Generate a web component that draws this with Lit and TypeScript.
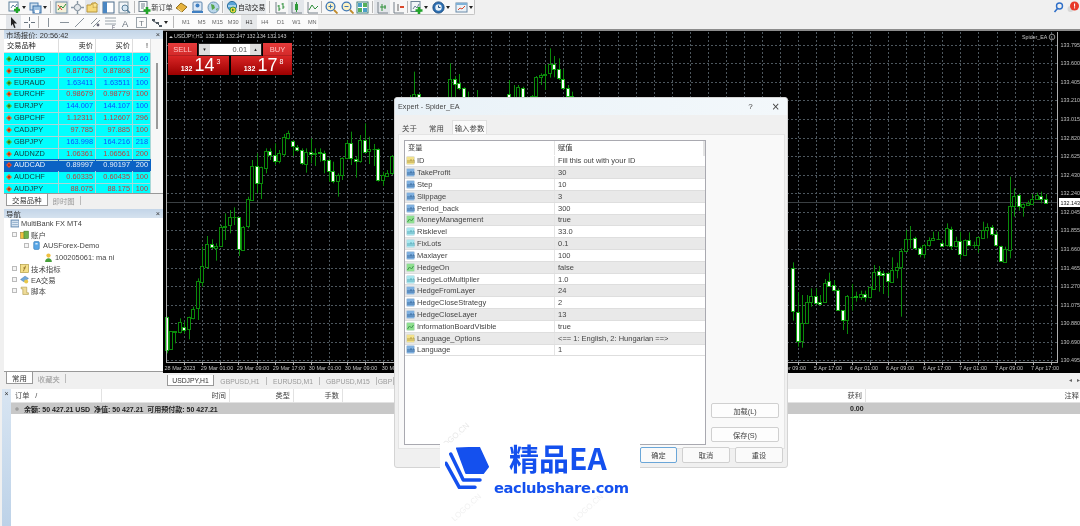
import { LitElement, html, css, svg } from "lit";
import { customElement } from "lit/decorators.js";

// [zoomX, bodyTop, bodyBottom, high, low, whiteBody]
type Candle = [number, number, number, number, number, number];

const leftCandles: Candle[] = [
  [5,560,658,560,670,1],[18,604,658,604,660,0],[31,604,606,604,640,0],[45,575,606,565,610,0],[58,590,598,575,610,1],
  [72,562,598,560,628,0],[85,538,565,530,568,0],[99,454,535,445,570,0],[112,408,455,350,470,0],[126,342,410,318,412,0],
  [140,342,352,328,358,1],[153,348,355,340,392,0],[167,290,346,285,350,0],[180,288,290,250,330,0],[194,262,287,240,310,0],
  [207,262,263,232,285,0],[221,262,358,262,378,1],[234,290,358,288,360,0],[248,208,290,200,295,0],[262,108,210,90,212,0],
  [275,108,160,70,190,1],[289,112,160,110,207,0],[302,62,112,55,130,0],[316,62,75,55,90,1],[329,75,94,40,105,1],
  [343,70,95,60,100,0],[356,20,70,12,80,0],[370,8,22,2,28,0],[383,34,50,30,78,1],[397,50,60,45,65,1],
  [410,60,100,55,105,1],[424,65,100,55,128,0],[437,65,72,25,100,1],[451,68,72,55,108,0],[464,67,70,55,95,1],
  [478,70,90,62,130,1],[491,90,124,85,155,1],[505,124,154,95,160,1],[519,136,154,130,200,0],[532,84,136,82,150,0],
  [546,40,85,30,88,0],[559,40,86,5,105,1],[573,86,92,80,143,1],[586,30,94,15,98,0],[600,30,65,-20,68,1],
  [613,58,64,20,102,0],[627,58,59,42,108,0],[640,58,150,55,155,1],[654,136,150,125,168,0],[667,128,136,120,140,0],[681,78,130,75,135,0],
];
const topCandles: Candle[] = [
  [150,300,301,285,310,0],[163,283,310,215,320,0],[177,283,310,283,320,1],[271,238,310,190,320,0],[285,238,252,228,290,1],
  [298,250,265,222,270,1],[312,263,310,262,320,1],[325,310,311,275,320,0],[352,310,311,270,320,0],[448,283,310,240,320,1],
  [461,310,311,255,320,0],[475,262,310,255,320,0],[488,264,310,260,320,1],[515,287,310,285,320,0],[529,232,288,228,310,0],
  [542,226,233,220,255,0],[556,222,226,195,270,0],[569,192,220,145,233,0],[583,192,208,168,232,1],[596,208,236,175,240,1],
  [610,236,264,208,268,1],[623,264,288,255,290,1],[637,287,310,275,320,1],
];
const rightCandles: Candle[] = [
  [25,265,395,247,422,1],[39,397,483,337,500,1],[52,430,483,345,503,0],[65,367,430,345,432,0],[79,348,365,325,380,0],
  [92,348,370,325,372,1],[106,366,372,345,375,1],[120,310,367,297,368,0],[133,302,316,278,320,1],[147,316,331,300,335,1],
  [160,331,391,325,393,1],[174,391,420,391,450,1],[187,347,420,345,462,0],[201,350,351,312,392,0],[214,348,352,335,365,1],
  [228,342,350,332,360,0],[241,342,350,332,365,1],[255,322,352,320,355,0],[268,275,325,255,330,0],[282,274,287,258,335,1],
  [295,280,287,272,342,1],[309,280,303,275,348,1],[322,269,304,232,305,0],[336,260,270,248,295,0],[349,213,260,205,410,0],
  [363,178,214,150,215,0],[376,177,178,138,205,0],[390,175,204,170,208,1],[404,204,222,200,232,1],[417,194,222,192,235,0],
  [431,180,194,172,200,0],[444,173,180,155,182,0],[458,176,177,155,180,0],[471,188,197,180,200,1],[485,145,197,130,200,0],
  [498,147,197,140,210,1],[512,184,198,170,202,0],[525,184,223,155,238,1],[539,180,224,178,226,0],[552,180,195,157,198,1],
  [566,196,197,185,205,0],[579,172,197,170,218,0],[593,150,173,125,175,0],[606,142,150,130,175,0],[620,142,163,135,168,1],
  [634,163,197,152,200,1],[647,199,244,197,246,1],[661,206,245,200,247,0],[674,77,208,-10,235,0],[688,48,78,25,110,0],
  [701,46,80,42,92,1],[715,72,80,70,110,0],[728,68,73,62,78,0],[742,58,72,42,75,0],[755,46,58,38,60,0],
  [769,49,57,35,70,1],[783,57,68,42,70,1],
];

const drawCandles = (list: Candle[], ox: number, oy: number) =>
  list.map(([zx, t, b, hi, lo, white]) => {
    const x = Math.round(ox + zx / 3) + 0.5;
    const top = Math.round(oy + t / 3) + 0.5;
    const h = Math.max(0, Math.round((b - t) / 3));
    return svg`
      <line x1=${x} x2=${x} y1=${oy + hi / 3} y2=${oy + lo / 3} class="wick"></line>
      ${h < 1
        ? svg`<line x1=${x - 2} x2=${x + 2} y1=${top} y2=${top} class="wick"></line>`
        : svg`<rect x=${x - 2} y=${top} width="3" height=${h} class=${white ? "bear" : "bull"}></rect>`}`;
  });

const prices = ["133.795","133.600","133.405","133.210","133.015","132.820","132.625","132.430","132.240","132.045","131.855","131.660","131.465","131.270","131.075","130.880","130.690","130.495"];
const times: [number, string][] = [
  [180,"28 Mar 2023"],[217,"29 Mar 01:00"],[253,"29 Mar 09:00"],[289,"29 Mar 17:00"],[325,"30 Mar 01:00"],[361,"30 Mar 09:00"],[398,"30 Mar 17:00"],
  [792,"5 Apr 09:00"],[828,"5 Apr 17:00"],[864,"6 Apr 01:00"],[900,"6 Apr 09:00"],[937,"6 Apr 17:00"],[973,"7 Apr 01:00"],[1009,"7 Apr 09:00"],[1045,"7 Apr 17:00"],
];

const quotes = [
  ["AUDUSD","0.66658","0.66718","60","up"],["EURGBP","0.87758","0.87808","50","down"],["EURAUD","1.63411","1.63511","100","up"],
  ["EURCHF","0.98679","0.98779","100","down"],["EURJPY","144.007","144.107","100","up"],["GBPCHF","1.12311","1.12607","296","down"],
  ["CADJPY","97.785","97.885","100","down"],["GBPJPY","163.998","164.216","218","up"],["AUDNZD","1.06361","1.06561","200","down"],
  ["AUDCAD","0.89997","0.90197","200","sel"],["AUDCHF","0.60335","0.60435","100","down"],["AUDJPY","88.075","88.175","100","down"],
];

const params: [string, string, string][] = [
  ["ab","ID","Fill this out with your ID"],["num","TakeProfit","30"],["num","Step","10"],["num","Slippage","3"],["num","Period_back","300"],
  ["bool","MoneyManagement","true"],["dbl","Risklevel","33.0"],["dbl","FixLots","0.1"],["num","Maxlayer","100"],["bool","HedgeOn","false"],
  ["dbl","HedgeLotMultiplier","1.0"],["num","HedgeFromLayer","24"],["num","HedgeCloseStrategy","2"],["num","HedgeCloseLayer","13"],
  ["bool","InformationBoardVisible","true"],["ab","Language_Options","<== 1: English, 2: Hungarian ==>"],["num","Language","1"],
];

const paths: Record<string, unknown> = {
  newchart: svg`<rect x="1" y="1" width="9" height="9" fill="#fff" stroke="#5b7f99"/><path d="M3 7l2-3 2 2 2-3" stroke="#5b7f99" fill="none"/><path d="M9 6v6M6 9h6" stroke="#22a52a" stroke-width="2.4"/>`,
  save: svg`<rect x="1" y="2" width="8" height="7" fill="#cfe0ef" stroke="#4d7fb0"/><rect x="4" y="5" width="8" height="7" fill="#9cc1e2" stroke="#3b6ea5"/><rect x="6" y="9" width="4" height="3" fill="#fff"/>`,
  chartbox: svg`<rect x="1" y="1" width="11" height="11" fill="#f5f0d8" stroke="#6f8da6"/><path d="M3 9l3-4 2 2 3-4" stroke="#2f8f3a" fill="none"/><path d="M3 4l4 5" stroke="#d9482b"/>`,
  move: svg`<circle cx="6.5" cy="6.5" r="3.2" fill="#e2e6ea" stroke="#7c8a96"/><path d="M6.5 0v3M6.5 10v3M0 6.5h3M10 6.5h3" stroke="#8695a2" stroke-width="1.4"/>`,
  folder: svg`<path d="M1 4h4l1-2h4l1 2v7H1z" fill="#f6d978" stroke="#b9963c"/><path d="M9 1l1 2 2 .3-1.5 1.5.4 2L9 6l-2 .8.4-2L6 3.3 8 3z" fill="#fbe48f" stroke="#b9963c" stroke-width=".6"/>`,
  window: svg`<rect x="1" y="1" width="11" height="11" fill="#fff" stroke="#4c6d8c"/><rect x="1" y="1" width="4" height="11" fill="#4a86c2"/>`,
  tester: svg`<rect x="1" y="1" width="9" height="11" fill="#f2f5f8" stroke="#7e929f"/><circle cx="7" cy="7" r="3" fill="#d6e6f2" stroke="#5a7f9a"/><path d="M9 9l3 3" stroke="#5a7f9a" stroke-width="1.5"/>`,
  order: svg`<rect x="1" y="0.5" width="8" height="10" fill="#fff" stroke="#6f7f8c"/><path d="M3 3h4M3 5h4M3 7h3" stroke="#6f7f8c"/><path d="M9 6v7M5.5 9.5h7" stroke="#22a52a" stroke-width="2.6"/>`,
  gold: svg`<path d="M1 7l5-5 6 4-5 5z" fill="#e6b23c" stroke="#94701e"/><path d="M3 7.5l4 3" stroke="#fbe08c"/>`,
  user: svg`<rect x="2" y="1" width="9" height="9" rx="1" fill="#dde9f5" stroke="#5a84ad"/><circle cx="6.5" cy="4.5" r="2" fill="#3f7fc2"/><path d="M1 12h11v-2H1z" fill="#3f7fc2"/>`,
  globe: svg`<circle cx="6.5" cy="6.5" r="5.5" fill="#b9d6ea" stroke="#6d94b2"/><path d="M4 3l3 1 1 3-3 2zM9 8l2-1-1 3z" fill="#55a64a"/>`,
  autot: svg`<circle cx="7" cy="5" r="4.6" fill="#57a3d6" stroke="#2e6f9c"/><path d="M3 5h8" stroke="#fff"/><circle cx="8" cy="9" r="3" fill="#f0d33a" stroke="#3f9a3c"/><path d="M7 7.6l2.4 1.4-2.4 1.4z" fill="#2a8a2f"/>`,
  bars: svg`<path d="M2 1v11h10" stroke="#77808a" fill="none"/><path d="M5 4v6M3.5 5H5M5 8h1.5" stroke="#2f8f3a"/><path d="M9 2v6M7.5 3H9M9 6h1.5" stroke="#2f8f3a"/>`,
  candles: svg`<path d="M2 1v11h10" stroke="#77808a" fill="none"/><rect x="5" y="3" width="3" height="6" fill="#2f9a3a"/><path d="M6.5 1v10" stroke="#2f9a3a"/>`,
  lines: svg`<path d="M2 1v11h10" stroke="#77808a" fill="none"/><path d="M3 9l3-5 3 4 3-3" stroke="#2f8f3a" fill="none"/>`,
  zoomin: svg`<circle cx="5.5" cy="5.5" r="4.4" fill="#fdf2c4" stroke="#3d76b5" stroke-width="1.3"/><path d="M9 9l3.5 3.5" stroke="#c08a2a" stroke-width="1.8"/><path d="M3.5 5.5h4M5.5 3.5v4" stroke="#3d76b5"/>`,
  zoomout: svg`<circle cx="5.5" cy="5.5" r="4.4" fill="#fdf2c4" stroke="#3d76b5" stroke-width="1.3"/><path d="M9 9l3.5 3.5" stroke="#c08a2a" stroke-width="1.8"/><path d="M3.5 5.5h4" stroke="#3d76b5"/>`,
  grid: svg`<rect x="1" y="1" width="11" height="11" fill="#fff" stroke="#3f7f7a"/><rect x="2" y="2" width="4" height="4" fill="#4aa0c8"/><rect x="7" y="2" width="4" height="4" fill="#54b05a"/><rect x="2" y="7" width="4" height="4" fill="#54b05a"/><rect x="7" y="7" width="4" height="4" fill="#4aa0c8"/>`,
  shift: svg`<path d="M2 1v11h10" stroke="#77808a" fill="none"/><path d="M6 3v7M9 4v4" stroke="#2f8f3a"/><path d="M4 6h6" stroke="#2f8f3a"/>`,
  autos: svg`<path d="M2 1v11h10" stroke="#77808a" fill="none"/><path d="M6 3v7" stroke="#666"/><path d="M8 6h4" stroke="#d9482b" stroke-width="2"/>`,
  indic: svg`<rect x="1" y="0.5" width="9" height="10" fill="#f2f5f8" stroke="#6f8498"/><path d="M3 8l2-3 2 2 2-4" stroke="#6f8498" fill="none"/><path d="M9 6v7M5.5 9.5h7" stroke="#22a52a" stroke-width="2.6"/>`,
  clock: svg`<circle cx="6.5" cy="6.5" r="5.6" fill="#2c6fb3" stroke="#1e4f82"/><circle cx="6.5" cy="6.5" r="3.2" fill="#e8f1f8"/><path d="M6.5 4.5v2h2" stroke="#1e4f82" fill="none"/>`,
  tmpl: svg`<rect x="1" y="2" width="11" height="9" fill="#eaf2f8" stroke="#6a8aa8"/><rect x="1" y="2" width="11" height="2" fill="#7fb0d6"/><path d="M3 9l2-2 2 1 3-3" stroke="#d9482b" fill="none"/>`,
  cursor: svg`<path d="M4 1l6 6.5H7l1.6 4-1.4.5L5.7 8 4 10z" fill="#222"/>`,
  cross: svg`<path d="M6.5 1v4M6.5 8v4M1 6.5h4M8 6.5h4" stroke="#6b7680"/>`,
  vline: svg`<path d="M6.5 2v9" stroke="#8a939b"/>`,
  hline: svg`<path d="M2 6.5h9" stroke="#8a939b"/>`,
  tline: svg`<path d="M2 11l9-9" stroke="#8a939b"/>`,
  chan: svg`<path d="M2 8l6-6M4 11l7-7" stroke="#8a939b"/><circle cx="9" cy="9" r="1.4" fill="#667"/>`,
  fibo: svg`<path d="M1 2h11M1 5h11M1 8h11" stroke="#9aa3aa"/><text x="8" y="13" font-size="5" fill="#667">F</text>`,
  letter: svg`<text x="3" y="10.5" font-size="9.5" font-family="Liberation Sans" fill="#6e7780">A</text>`,
  tbox: svg`<rect x="1.5" y="1.5" width="10" height="10" fill="none" stroke="#9aa3aa"/><text x="4" y="9.8" font-size="8" font-family="Liberation Sans" fill="#6e7780">T</text>`,
  misc: svg`<path d="M2 3h3v2H2zM6 6h3v2H6zM9 9h3v2H9z" fill="#4e5860"/><path d="M3 5l4 2M8 8l2 2" stroke="#4e5860"/>`,
};

const icon = (name: string) => html`<svg class="ic" viewBox="0 0 13 13">${paths[name]}</svg>`;

type Tool = { i?: string; w: number; t?: string; k?: "arrow" | "sep" | "gap" | "on" };
const row1: Tool[] = [
  { w: 7, k: "gap" }, { i: "newchart", w: 14 }, { w: 6, k: "arrow" }, { w: 1, k: "gap" }, { i: "save", w: 14 }, { w: 6, k: "arrow" }, { w: 5, k: "sep" },
  { i: "chartbox", w: 16, k: "on" }, { i: "move", w: 16 }, { i: "folder", w: 15, k: "on" }, { i: "window", w: 16 }, { i: "tester", w: 16 }, { w: 5, k: "sep" },
  { i: "order", w: 14 }, { t: "新订单", w: 22 }, { i: "gold", w: 16 }, { i: "user", w: 16 }, { i: "globe", w: 16 }, { w: 3, k: "sep" },
];
const row1b: Tool[] = [
  { w: 6, k: "sep" }, { i: "bars", w: 16 }, { i: "candles", w: 16, k: "on" }, { i: "lines", w: 16 }, { w: 3, k: "sep" },
  { i: "zoomin", w: 16 }, { i: "zoomout", w: 16 }, { i: "grid", w: 15 }, { w: 4, k: "sep" }, { i: "shift", w: 16, k: "on" }, { i: "autos", w: 16 }, { w: 3, k: "sep" },
  { i: "indic", w: 14 }, { w: 6, k: "arrow" }, { w: 2, k: "gap" }, { i: "clock", w: 14 }, { w: 6, k: "arrow" }, { w: 3, k: "gap" }, { i: "tmpl", w: 14 }, { w: 6, k: "arrow" },
];
const row2: Tool[] = [
  { w: 6, k: "gap" }, { i: "cursor", w: 15, k: "on" }, { i: "cross", w: 16 }, { w: 3, k: "sep" }, { i: "vline", w: 16 }, { i: "hline", w: 16 }, { i: "tline", w: 15 },
  { i: "chan", w: 16 }, { i: "fibo", w: 15 }, { i: "letter", w: 15 }, { i: "tbox", w: 16 }, { i: "misc", w: 14 }, { w: 6, k: "arrow" }, { w: 9, k: "sep" },
];
const periods = ["M1", "M5", "M15", "M30", "H1", "H4", "D1", "W1", "MN"];

@customElement("app-root")
export class AppRoot extends LitElement {
  static styles = css`
    :host {
      display: block;
      position: relative;
      width: 1080px;
      height: 526px;
      overflow: hidden;
      background: #fff;
      color: #222;
      font: 7.2px "Liberation Sans", "Noto Sans CJK SC", sans-serif;
      filter: blur(0.4px);
    }
    .ic { width: 13px; height: 13px; display: block; }
    .toolbars { height: 30px; background: #f0f0f0; border-bottom: 1px solid #8c8c8c; box-sizing: border-box; }
    .bar { display: flex; align-items: center; height: 15px; }
    .bar1 { width: 475px; background: #f7f7f7; border-right: 1px solid #c4c4c4; border-bottom: 1px solid #c4c4c4; border-radius: 0 0 2px 0; box-sizing: border-box; }
    .bar2 { width: 318px; background: #fbfbfb; height: 14px; }
    .rows { position: relative; }
    .right-icons { position: absolute; right: 0; top: 0; height: 15px; display: flex; align-items: center; gap: 2px; }
    .tool { height: 14px; display: flex; align-items: center; justify-content: center; flex: none; box-sizing: border-box; }
    .tool.on { background: #e3e6ea; }
    .tool-text { font-size: 7.2px; color: #333; white-space: nowrap; }
    .sep::after { content: ""; width: 1px; height: 12px; background: #b8b8b8; display: block; }
    .arrow::after { content: ""; border: 2px solid transparent; border-top: 3px solid #222; border-bottom: 0; display: block; }
    .auto { width: 42px; height: 14px; background: #e8ebee; display: flex; align-items: center; padding-left: 1px; box-sizing: border-box; flex: none; font-size: 6.8px; white-space: nowrap; }
    .period { width: 15.8px; height: 14px; display: flex; align-items: center; justify-content: center; color: #666; font-size: 5.6px; flex: none; }
    .period.on { background: #e6e8ea; color: #333; }
    .main { display: flex; height: 357px; }
    .left { width: 163px; background: #f0f0f0; flex: none; padding-left: 4px; box-sizing: border-box; display: flex; flex-direction: column; }
    .caption { height: 9px; background: linear-gradient(#c3d5e8, #d5e2ef); font-size: 7.4px; display: flex; align-items: center; justify-content: space-between; padding: 0 3px 0 2px; color: #333; }
    .market { height: 154px; display: flex; background: #f7f7f7; overflow: hidden; }
    .mtable { width: 147px; flex: none; }
    .mhead, .mrow { display: grid; grid-template-columns: 55px 37px 37px 18px; }
    .mhead { height: 14px; background: #fff; align-items: center; font-size: 7.2px; border-bottom: 1px solid #ddd; box-sizing: border-box; }
    .mhead span { border-right: 1px solid #ddd; text-align: right; padding-right: 2px; line-height: 13px; }
    .mhead span:first-child { text-align: left; padding-left: 3px; }
    .mrow { height: 11.82px; background: #00ffff; font-size: 7.4px; line-height: 12px; }
    .mrow span { border-right: 1px solid #a8d8d8; border-bottom: 1px solid #a8d8d8; text-align: right; padding-right: 2px; box-sizing: border-box; }
    .mrow .sym { text-align: left; padding-left: 2px; display: flex; align-items: center; gap: 2px; }
    .mrow.up span { color: #0c52ff; }
    .mrow.down span { color: #c23a3a; }
    .mrow span.sym { color: #14383c; }
    .mrow.sel { background: #0a62c4; }
    .mrow.sel span { color: #e6f0fb; border-color: #0a62c4; }
    .dot { width: 6px; height: 6px; flex: none; display: block; }
    .mscroll { flex: 1; display: flex; justify-content: center; padding-top: 24px; }
    .mscroll i { width: 2px; height: 66px; background: #9a9a9a; }
    .tabs { display: flex; font-size: 7.4px; align-items: flex-start; padding-left: 2px; }
    .ltab { padding: 0 5px; display: flex; align-items: center; color: #999; border-right: 1px solid #bbb; box-sizing: border-box; height: 9px; margin-top: 2px; }
    .ltab.on { background: #fff; color: #333; border: 1px solid #999; border-top: 0; height: 12px; margin-top: 0; }
    .mtabs { height: 16px; border-top: 1px solid #999; box-sizing: border-box; }
    .nav { height: 153px; background: #fff; box-sizing: border-box; }
    .tree { height: 11.2px; display: flex; align-items: center; gap: 1px; font-size: 7.4px; color: #444; white-space: nowrap; }
    .t0 { padding-left: 6px; }
    .t1 { padding-left: 8px; }
    .t2 { padding-left: 20px; }
    .t3 { padding-left: 40px; }
    .plus { width: 5px; height: 5px; border: 1px solid #bbb; background: #f5f5f5; margin-right: 2px; flex: none; box-sizing: border-box; }
    .ticon { width: 9px; height: 9px; flex: none; display: block; margin-right: 1px; }
    .ntabs { height: 15px; border-top: 1px solid #999; box-sizing: border-box; }
    .center { flex: 1; background: #050505; display: flex; flex-direction: column; }
    .chart { display: block; width: 917px; height: 343px; background: #000; font-family: "Liberation Sans", sans-serif; }
    .wick { stroke: #0a8a0a; stroke-width: 1; }
    .bull { fill: #000; stroke: #0a8a0a; stroke-width: 1; shape-rendering: crispEdges; }
    .bear { fill: #fff; stroke: #12a812; stroke-width: 1; shape-rendering: crispEdges; }
    .gridline { stroke: #4d575e; stroke-width: 1; stroke-dasharray: 2 2; shape-rendering: crispEdges; }
    .frame { stroke: #b0b0b0; stroke-width: 1; fill: none; shape-rendering: crispEdges; }
    .plabel { fill: #c0c0c0; font-size: 5.4px; }
    .tlabel { fill: #c0c0c0; font-size: 5.5px; text-anchor: middle; }
    .hlabel { fill: #c8c8c8; font-size: 5.3px; }
    .ctabs { height: 14px; background: #f0f0f0; display: flex; align-items: flex-start; padding: 2px 0 0 4px; box-sizing: border-box; font-size: 6.8px; color: #9a9a9a; position: relative; }
    .ctab { height: 8px; margin-top: 2px; display: flex; align-items: center; justify-content: center; border-right: 1px solid #bbb; flex: none; }
    .ctab.on { height: 11px; margin-top: 0; background: #fff; color: #333; border: 1px solid #999; border-top: 0; box-sizing: border-box; }
    .scrollarrows { position: absolute; right: 0; top: 3px; display: flex; gap: 5px; color: #666; font-size: 6px; }
    .terminal { height: 139px; display: flex; background: #f0f0f0; padding-top: 2px; box-sizing: border-box; }
    .tstrip { width: 9px; flex: none; margin-left: 2px; background: linear-gradient(#d8e5f2, #bdd2e8); text-align: center; font-size: 7px; line-height: 9px; color: #333; }
    .tmain { flex: 1; background: #fff; }
    .thead { display: grid; grid-template-columns: 91px 128px 64px 49px 523px 1fr; height: 14px; font-size: 7.2px; align-items: center; border-bottom: 1px solid #e2e2e2; box-sizing: border-box; color: #444; }
    .thead span { text-align: right; padding-right: 3px; border-right: 1px solid #e2e2e2; line-height: 13px; white-space: nowrap; overflow: hidden; }
    .thead span:first-child { text-align: left; padding-left: 4px; white-space: pre; }
    .thead span:last-child { border: 0; padding-right: 1px; }
    .balance { height: 11px; background: #c8c8c8; display: flex; align-items: center; font-weight: bold; font-size: 7px; color: #222; position: relative; white-space: pre; padding-left: 4px; }
    .balance b { width: 4px; height: 4px; border-radius: 50%; background: #999; border: 1px solid #aaa; margin-right: 5px; box-sizing: border-box; }
    .zero { position: absolute; left: 839px; }

    .tp { position: absolute; left: 168px; top: 43px; width: 124px; height: 32px; display: grid; grid-template-columns: 61px 2px 61px; grid-template-rows: 13px 19px; color: #fff; }
    .tp-btn { width: 29px; background: linear-gradient(#e53b3b, #d42a2a); color: #ffc4c4; font-size: 7.6px; display: flex; align-items: center; justify-content: center; border-bottom: 1px solid #b52020; box-sizing: border-box; }
    .tp-top { grid-column: 1 / 4; display: flex; justify-content: space-between; }
    .tp-spin { flex: 1; margin: 0 1px; background: #222; padding: 1px; display: flex; box-sizing: border-box; height: 13px; }
    .tp-spin i { width: 11px; background: #ddd; color: #222; font: normal 5px/11px "DejaVu Sans", sans-serif; text-align: center; }
    .tp-spin span { flex: 1; background: #fff; color: #555; font-size: 7.4px; line-height: 11px; text-align: right; padding-right: 3px; }
    .tp-big { background: linear-gradient(#d92525, #9c0000); display: flex; align-items: flex-end; justify-content: center; padding-left: 4px; box-sizing: border-box; }
    .tp-sell { grid-column: 1; }
    .tp-buy { grid-column: 3; }
    .tp-small { font-size: 7px; font-weight: bold; line-height: 9px; margin-bottom: 2px; margin-right: 2px; }
    .tp-num { font-size: 18px; line-height: 19px; }
    .tp-sup { font-size: 7px; line-height: 8px; align-self: flex-start; margin-left: 2px; margin-top: 2px; }

    .dialog { position: absolute; left: 394px; top: 97px; width: 394px; height: 371px; background: #f0f0f0; border: 1px solid #d4d4d4; border-radius: 3px; box-sizing: border-box; display: flex; flex-direction: column; overflow: hidden; }
    .dtitle { height: 17px; flex: none; background: linear-gradient(90deg, #e9f2f8, #f3f8fb); display: flex; align-items: center; padding: 0 7px 0 3px; font-size: 7.2px; color: #444; }
    .dtitle span:first-child { flex: 1; }
    .dtitle .q { margin-right: 19px; font-size: 8px; }
    .dtitle .x { font-size: 10px; line-height: 10px; font-family: "DejaVu Sans", sans-serif; }
    .dtabs { height: 19px; flex: none; display: flex; align-items: flex-end; padding-left: 1px; font-size: 7.4px; color: #444; }
    .dtab { width: 27px; height: 13px; display: flex; align-items: center; justify-content: center; flex: none; }
    .dtab.on { width: 35px; height: 14px; margin-left: 2px; background: #fbfbfb; border: 1px solid #e0e0e0; border-bottom: 0; box-sizing: border-box; }
    .dpanel { height: 315px; flex: none; margin: 0 2px 0 3px; background: #f9f9f9; border: 1px solid #e4e4e4; box-sizing: border-box; padding: 5px 5px 4px 5px; display: flex; gap: 5px; }
    .ptable { width: 302px; height: 305px; border: 1px solid #a9a9b0; background: #fff; box-sizing: border-box; flex: none; }
    .phead, .prow { display: grid; grid-template-columns: 150px 1fr; }
    .phead { height: 14.5px; align-items: center; border-right: 2px solid #e4e4e4; font-size: 7.2px; color: #333; }
    .phead span { padding-left: 3px; border-right: 1px solid #e4e4e4; line-height: 14px; }
    .phead span:last-child { border: 0; padding-left: 3px; }
    .prow { height: 11.82px; box-sizing: border-box; border-bottom: 1px solid #dedede; align-items: center; font-size: 7.5px; color: #444; }
    .prow.alt { background: #e9e9e9; }
    .pname { display: flex; align-items: center; gap: 2px; padding-left: 1px; border-right: 1px solid #e4e4e4; height: 100%; }
    .pval { padding-left: 3px; white-space: pre; }
    .pic { width: 9px; height: 9px; display: block; flex: none; }
    .side { flex: 1; display: flex; flex-direction: column; justify-content: flex-end; align-items: stretch; gap: 9px; padding-bottom: 2px; }
    .btn { height: 15px; background: #fdfdfd; border: 1px solid #d0d0d0; border-radius: 2px; display: flex; align-items: center; justify-content: center; font-size: 7.2px; color: #444; box-sizing: border-box; flex: none; }
    .dfoot { display: flex; justify-content: flex-end; gap: 5px; padding-right: 4px; margin-top: -2px; position: relative; }
    .dfoot .btn { width: 48px; height: 16px; background: #fafafa; }
    .dfoot .ok { width: 37px; border: 1px solid #6aa6d8; }

    .logo { position: absolute; left: 440px; top: 443px; width: 200px; height: 83px; background: #fff; }
    .logo-mark { position: absolute; left: 5px; top: 4px; width: 44px; height: 44px; display: block; }
    .logo-name { position: absolute; left: 69px; top: -4px; font: bold 30px/36px "Noto Sans CJK SC", sans-serif; color: #1450ee; white-space: nowrap; }
    .logo-url { position: absolute; left: 54px; top: 35px; font: bold 14.7px/20px "DejaVu Sans", "Noto Sans", sans-serif; letter-spacing: -0.4px; color: #1450ee; white-space: nowrap; }
    .wm { position: absolute; font-size: 8px; color: #f1f1f1; transform: rotate(-42deg); white-space: nowrap; }
    .w1 { left: 436px; top: 432px; color: #e8e8e8; }
    .w2 { left: 8px; top: 60px; }
    .w3 { left: 130px; top: 60px; }
  `;

  private renderTools(list: Tool[]) {
    return list.map((t) => {
      const cls = `tool ${t.k === "on" ? "on" : ""} ${t.k === "sep" ? "sep" : ""} ${t.k === "arrow" ? "arrow" : ""}`;
      return html`<div class=${cls} style="width:${t.w}px">${t.i ? icon(t.i) : ""}${t.t ? html`<span class="tool-text">${t.t}</span>` : ""}</div>`;
    });
  }

  private renderChart() {
    const vx: number[] = [];
    for (let x = 184.3; x < 1056; x += 18.05) vx.push(Math.round(x) + 0.5);
    const hy = prices.map((_, i) => 44.6 + i * 18.58);
    return html`<svg class="chart" viewBox="163 30 917 343">
      <rect x="163" y="30" width="917" height="1" fill="#8c8c8c"></rect>
      ${vx.map((x) => svg`<line class="gridline" x1=${x} x2=${x} y1="32" y2="362"></line>`)}
      ${hy.map((y) => svg`<line class="gridline" x1="167" x2="1057" y1=${Math.round(y) + 0.5} y2=${Math.round(y) + 0.5}></line>`)}
      <line x1="167" x2="1057" y1="202.5" y2="202.5" stroke="#3a3f42"></line>
      ${drawCandles(leftCandles, 165, 130)}
      ${drawCandles(topCandles, 360, 0)}
      ${drawCandles(rightCandles, 785, 180)}
      <path class="frame" d="M166.5 32V362.5H1057.5V32"></path>
      ${vx.map((x) => svg`<line x1=${x} x2=${x} y1="362" y2="365" stroke="#b0b0b0"></line>`)}
      ${prices.map((p, i) => svg`<text class="plabel" x="1060.500" y=${hy[i] + 2}>${p}</text>`)}
      ${times.map(([x, t]) => svg`<text class="tlabel" x=${x} y="370">${t}</text>`)}
      <rect x="1059" y="198" width="21" height="9" fill="#fff"></rect>
      <text x="1060.500" y="204.800" font-size="5.4" fill="#111">132.143</text>
      <path d="M169 38l2-2 2 2z" fill="#ccc"></path>
      <text class="hlabel" x="174" y="38">USDJPY,H1&#160;&#160;132.185 132.247 132.134 132.143</text>
      <text class="hlabel" x="1022" y="39">Spider_EA</text>
      <circle cx="1052" cy="37" r="2.8" fill="none" stroke="#c8c8c8" stroke-width=".7"></circle>
      <path d="M1050.8 36.2h.5M1052.7 36.2h.5M1050.8 38c.7.5 1.7.5 2.4 0" stroke="#c8c8c8" stroke-width=".5" fill="none"></path>
    </svg>`;
  }

  private renderParamIcon(kind: string) {
    const c = { ab: ["#f3e18a", "#a58f3a"], num: ["#7fb0e0", "#2f5f95"], bool: ["#8fe08f", "#3a8f4a"], dbl: ["#a8e6ee", "#4aa0ae"] }[kind]!;
    const mark =
      kind === "bool"
        ? svg`<path d="M1.5 7l2-3 2 2 2-3" stroke=${c[1]} fill="none" stroke-width=".9"/>`
        : svg`<path d="M2 4v3M4 4v3M4 4h2v3M7 4h1v3" stroke=${c[1]} fill="none" stroke-width=".8"/>`;
    return html`<svg class="pic" viewBox="0 0 9 9"><rect x=".5" y=".5" width="8" height="8" rx="1" fill=${c[0]} stroke="#cdd6dc" stroke-width=".5"></rect>${mark}</svg>`;
  }

  render() {
    const treeIcons: Record<string, unknown> = {
      bank: svg`<rect x="1" y="1" width="7" height="6" fill="#dce8f4" stroke="#6f93b8"/><path d="M2 3h5M2 5h5" stroke="#6f93b8" stroke-width=".6"/>`,
      acc: svg`<rect x="0.5" y="2" width="4" height="5.5" fill="#f0c040" stroke="#a07a20" stroke-width=".5"/><rect x="3.5" y="1" width="4" height="6.5" fill="#6fb04a" stroke="#3f7a2a" stroke-width=".5"/>`,
      srv: svg`<rect x="1.5" y="0.5" width="5" height="7" rx="1" fill="#58a6e6" stroke="#2f72b0" stroke-width=".5"/><rect x="3" y="2" width="2" height="1" fill="#fff"/>`,
      person: svg`<circle cx="4" cy="2.3" r="1.9" fill="#f0c040"/><path d="M1 8c0-2.4 1.4-3.4 3-3.4S7 5.6 7 8z" fill="#46a03a"/>`,
      ind: svg`<rect x="0.5" y="0.5" width="7" height="7" fill="#f5e08a" stroke="#b09a3a" stroke-width=".6"/><path d="M3 6.5L5 1.5M2.8 3.5h2.2" stroke="#8a6a20" stroke-width=".7"/>`,
      ea: svg`<path d="M0.5 4l4-3 3 2-4 3z" fill="#6fa8dc" stroke="#3a6a9a" stroke-width=".4"/><circle cx="5.5" cy="5.8" r="1.8" fill="#e8c84a"/>`,
      scr: svg`<path d="M1 1h5v5h1.5v1.5H2.5V2.500H1z" fill="#efdc9a" stroke="#a8913a" stroke-width=".5"/>`,
    };
    const ti = (n: string) => html`<svg class="ticon" viewBox="0 0 8 8">${treeIcons[n]}</svg>`;
    return html`
      <div class="toolbars">
        <div class="rows">
          <div class="bar bar1">
            ${this.renderTools(row1)}
            <div class="auto">${icon("autot")}<span>自动交易</span></div>
            ${this.renderTools(row1b)}
          </div>
          <div class="right-icons">
            <svg class="ic" viewBox="0 0 13 13"><circle cx="7.5" cy="5" r="3" fill="none" stroke="#2f6fc8" stroke-width="1.4"></circle><path d="M5.500 7.500L2.500 11" stroke="#2f6fc8" stroke-width="1.6"></path></svg>
            <svg class="ic" viewBox="0 0 13 13"><circle cx="3.500" cy="8" r="3" fill="#d8d8d8"></circle><circle cx="7.500" cy="5" r="4.500" fill="#e83a2a"></circle><rect x="7" y="2.500" width="1.100" height="3.200" fill="#fff"></rect><rect x="7" y="6.300" width="1.100" height="1.100" fill="#fff"></rect></svg>
          </div>
          <div class="bar bar2">
            ${this.renderTools(row2)}
            ${periods.map((p) => html`<div class="period ${p === "H1" ? "on" : ""}">${p}</div>`)}
          </div>
        </div>
      </div>

      <div class="main">
        <div class="left">
          <div class="caption"><span>市场报价: 20:56:42</span><span>×</span></div>
          <div class="market">
            <div class="mtable">
              <div class="mhead"><span>交易品种</span><span>卖价</span><span>买价</span><span>!</span></div>
              ${quotes.map(([s, b, a, sp, d]) => html`
                <div class="mrow ${d}">
                  <span class="sym">
                    <svg class="dot" viewBox="0 0 6 6"><path d="M3 0l3 3-3 3-3-3z" fill=${d === "up" ? "#58b030" : d === "sel" ? "#e8452a" : "#e8642a"}></path><circle cx="3" cy="3" r="1" fill=${d === "up" ? "#1f6a20" : "#a03010"}></circle></svg>
                    ${s}
                  </span>
                  <span>${b}</span><span>${a}</span><span>${sp}</span>
                </div>`)}
            </div>
            <div class="mscroll"><i></i></div>
          </div>
          <div class="tabs mtabs"><div class="ltab on">交易品种</div><div class="ltab">即时图</div></div>
          <div class="caption"><span>导航</span><span>×</span></div>
          <div class="nav">
            <div class="tree t0">${ti("bank")}MultiBank FX MT4</div>
            <div class="tree t1"><i class="plus"></i>${ti("acc")}账户</div>
            <div class="tree t2"><i class="plus"></i>${ti("srv")}AUSForex-Demo</div>
            <div class="tree t3">${ti("person")}100205061: ma ni</div>
            <div class="tree t1"><i class="plus"></i>${ti("ind")}技术指标</div>
            <div class="tree t1"><i class="plus"></i>${ti("ea")}EA交易</div>
            <div class="tree t1"><i class="plus"></i>${ti("scr")}脚本</div>
          </div>
          <div class="tabs ntabs"><div class="ltab on">常用</div><div class="ltab">收藏夹</div></div>
        </div>
        <div class="center">
          ${this.renderChart()}
          <div class="ctabs">
            <div class="ctab on" style="width:47px">USDJPY,H1</div>
            <div class="ctab" style="width:52px">GBPUSD,H1</div>
            <div class="ctab" style="width:52px">EURUSD,M1</div>
            <div class="ctab" style="width:56px">GBPUSD,M15</div>
            <div class="ctab" style="width:16px">GBP</div>
            <div class="scrollarrows"><span>◂</span><span>▸</span></div>
          </div>
        </div>
      </div>

      <div class="terminal">
        <div class="tstrip">×</div>
        <div class="tmain">
          <div class="thead"><span>订单   /</span><span>时间</span><span>类型</span><span>手数</span><span>获利</span><span>注释</span></div>
          <div class="balance"><b></b>余额: 50 427.21 USD  净值: 50 427.21  可用预付款: 50 427.21<span class="zero">0.00</span></div>
        </div>
      </div>

      <div class="tp">
        <div class="tp-top">
          <div class="tp-btn">SELL</div>
          <div class="tp-spin"><i>▾</i><span>0.01</span><i>▴</i></div>
          <div class="tp-btn">BUY</div>
        </div>
        <div class="tp-big tp-sell"><span class="tp-small">132</span><span class="tp-num">14</span><span class="tp-sup">3</span></div>
        <div class="tp-big tp-buy"><span class="tp-small">132</span><span class="tp-num">17</span><span class="tp-sup">8</span></div>
      </div>

      <div class="dialog">
        <div class="dtitle"><span>Expert - Spider_EA</span><span class="q">?</span><span class="x">×</span></div>
        <div class="dtabs"><div class="dtab">关于</div><div class="dtab">常用</div><div class="dtab on">输入参数</div></div>
        <div class="dpanel">
          <div class="ptable">
            <div class="phead"><span>变量</span><span>赋值</span></div>
            ${params.map(([k, n, v], i) => html`
              <div class="prow ${i % 2 ? "alt" : ""}">
                <div class="pname">${this.renderParamIcon(k)}${n}</div>
                <div class="pval">${v}</div>
              </div>`)}
          </div>
          <div class="side"><div class="btn">加载(L)</div><div class="btn">保存(S)</div></div>
        </div>
        <div class="dfoot"><div class="btn ok">确定</div><div class="btn">取消</div><div class="btn">重设</div></div>
      </div>

      <span class="wm w1">LOGO.CN</span>
      <div class="logo">
        <svg class="logo-mark" viewBox="0 0 44 44">
          <path d="M11.700 1.300L34.300 .3L43.300 19.700L38.300 26.300H21Z" fill="#1450ee" stroke="#1450ee" stroke-width="1.500" stroke-linejoin="round"></path>
          <path d="M5.700 7L18.300 33H35" fill="none" stroke="#1450ee" stroke-width="3.500" stroke-linejoin="round" stroke-linecap="round"></path>
          <path d="M1 16.300L14.300 40.300H30" fill="none" stroke="#1450ee" stroke-width="3.500" stroke-linejoin="round" stroke-linecap="round"></path>
        </svg>
        <div class="logo-name">精品EA</div>
        <div class="logo-url">eaclubshare.com</div>
        <span class="wm w2">LOGO.CN</span>
        <span class="wm w3">LOGO.CN</span>
      </div>
    `;
  }
}
